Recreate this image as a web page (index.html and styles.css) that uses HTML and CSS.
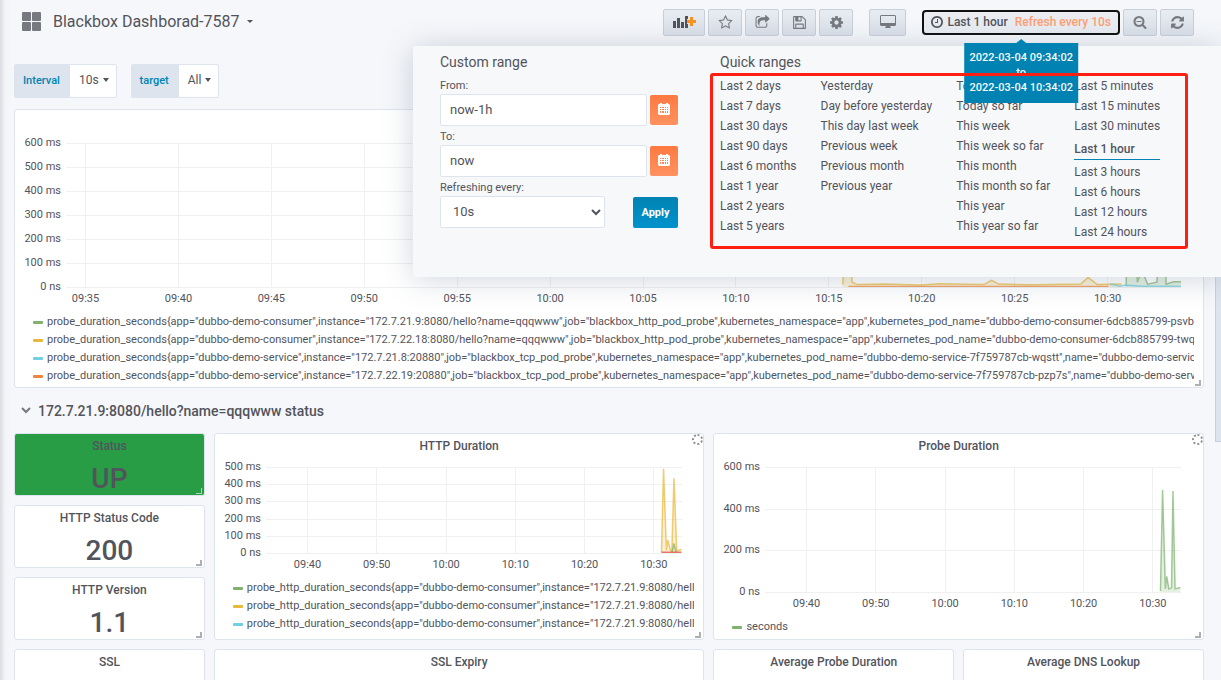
FILE: index.html
```html
<!DOCTYPE html>
<html lang="en">
<head>
    <meta charset="UTF-8">
    <meta name="viewport" content="width=device-width, initial-scale=1.0">
    <title>Blackbox Dashborad-7587</title>
    <link rel="stylesheet" href="styles.css">
</head>
<body>
    <!-- Navbar -->
    <header class="navbar">
        <button class="page-title">
            <svg class="grid-icon" viewBox="0 0 19 19"><rect width="9" height="9" rx="1"/><rect x="10" width="9" height="9" rx="1"/><rect y="10" width="9" height="9" rx="1"/><rect x="10" y="10" width="9" height="9" rx="1"/></svg>
            <span>Blackbox Dashborad-7587</span>
            <i class="caret"></i>
        </button>
        <div class="nav-group">
            <button class="nav-button wide" aria-label="Add panel">
                <svg width="23" height="14" viewBox="0 0 23 14"><path fill="#52545c" d="M0 6h3v7H0zM4 3h3v10H4zM8 7h3v6H8zM12 1h3v3h-1v5h1v4h-3z"/><path fill="#f79420" d="M17 2h3v3h3v3h-3v3h-3V8h-3V5h3z"/></svg>
            </button>
            <button class="nav-button" aria-label="Star">
                <svg width="15" height="15" viewBox="0 0 1792 1792"><path d="M1201 1004l306-297-422-62-189-382-189 382-422 62 306 297-73 421 378-199 377 199zm527-357q0 22-26 48l-363 354 86 500q1 7 1 20 0 50-41 50-19 0-40-12l-449-236-449 236q-22 12-40 12-21 0-31.500-14.500t-10.500-35.500q0-6 2-20l86-500-364-354q-25-27-25-48 0-37 56-46l502-73 225-455q19-41 49-41t49 41l225 455 502 73q56 9 56 46z"/></svg>
            </button>
            <button class="nav-button" aria-label="Share">
                <svg width="15" height="15" viewBox="0 0 1792 1792"><path d="M1472 989v259q0 119-84.500 203.500t-203.500 84.500h-832q-119 0-203.500-84.500t-84.500-203.500v-832q0-119 84.500-203.500t203.500-84.500h255q13 0 22.500 9.500t9.500 22.500q0 27-26 32-77 26-133 60-10 4-16 4h-112q-66 0-113 47t-47 113v832q0 66 47 113t113 47h832q66 0 113-47t47-113v-214q0-19 18-29 28-13 54-37 16-16 35-8 21 9 21 29zm237-496l-384 384q-18 19-45 19-12 0-25-5-39-17-39-59v-192h-160q-323 0-438 131-119 137-74 473 3 23-20 34-8 2-12 2-16 0-26-13-10-14-21-31t-39.500-68.500-49.500-99.500-38.500-114-17.500-122q0-49 3.500-91t14-90 28-88 47-81.500 68.500-74 94.500-61.500 124.500-48.500 159.500-30.500 196.500-11h160v-192q0-42 39-59 13-5 25-5 26 0 45 19l384 384q19 19 19 45t-19 45z"/></svg>
            </button>
            <button class="nav-button" aria-label="Save">
                <svg width="15" height="15" viewBox="0 0 1792 1792"><path d="M512 1536h768v-384h-768v384zm896 0h128v-896q0-14-10-38.500t-20-34.500l-281-281q-10-10-34-20t-39-10v416q0 40-28 68t-68 28h-576q-40 0-68-28t-28-68v-416h-128v1280h128v-416q0-40 28-68t68-28h832q40 0 68 28t28 68v416zm-384-928v-320q0-13-9.500-22.500t-22.500-9.500h-192q-13 0-22.500 9.500t-9.500 22.500v320q0 13 9.500 22.500t22.500 9.500h192q13 0 22.500-9.500t9.500-22.500zm640 32v928q0 40-28 68t-68 28h-1344q-40 0-68-28t-28-68v-1344q0-40 28-68t68-28h928q40 0 88 20t76 48l280 280q28 28 48 76t20 88z"/></svg>
            </button>
            <button class="nav-button" aria-label="Settings">
                <svg width="15" height="15" viewBox="0 0 1792 1792"><path d="M1152 896q0-106-75-181t-181-75-181 75-75 181 75 181 181 75 181-75 75-181zm512-109v222q0 12-8 23t-20 13l-185 28q-19 54-39 91 35 50 107 138 10 12 10 25t-9 23q-27 37-99 108t-94 71q-12 0-26-9l-138-108q-44 23-91 38-16 136-29 186-7 28-36 28h-222q-14 0-24.500-8.500t-11.500-21.500l-28-184q-49-16-90-37l-141 107q-10 9-25 9-14 0-25-11-126-114-165-168-7-10-7-23 0-12 8-23 15-21 51-66.500t54-70.500q-27-50-41-99l-183-27q-13-2-21-12.500t-8-23.500v-222q0-12 8-23t19-13l186-28q14-46 39-92-40-57-107-138-10-12-10-24 0-10 9-23 26-36 98.500-107.500t94.500-71.500q13 0 26 10l138 107q44-23 91-38 16-136 29-186 7-28 36-28h222q14 0 24.500 8.500t11.500 21.500l28 184q49 16 90 37l142-107q9-9 24-9 13 0 25 10 129 119 165 170 7 8 7 22 0 12-8 23-15 21-51 66.500t-54 70.500q26 50 41 98l183 28q13 2 21 12.500t8 23.500z"/></svg>
            </button>
        </div>
        <div class="nav-group">
            <button class="nav-button tv" aria-label="Cycle view mode">
                <svg width="16" height="14" viewBox="0 0 16 14"><path fill-rule="evenodd" d="M1 0h14l1 1v9l-1 1H1l-1-1V1zM1 1v7h14V1zM6 11h4l1 2H5z"/></svg>
            </button>
        </div>
        <div class="nav-group">
            <div class="picker">
                <button class="picker-button">
                    <svg width="12" height="12" viewBox="0 128 1536 1536"><path d="M896 544v448q0 14-9 23t-23 9h-320q-14 0-23-9t-9-23v-64q0-14 9-23t23-9h224v-352q0-14 9-23t23-9h64q14 0 23 9t9 23zm416 352q0-148-73-273t-198-198-273-73-273 73-198 198-73 273 73 273 198 198 273 73 273-73 198-198 73-273zm224 0q0 209-103 385.500t-279.500 279.500-385.500 103-385.500-103-279.500-279.500-103-385.500 103-385.500 279.500-279.500 385.500-103 385.500 103 279.500 279.500 103 385.500z"/></svg>
                    <span>Last 1 hour</span>
                    <span class="refresh-text">Refresh every 10s</span>
                </button>
                <div class="tooltip">2022-03-04 09:34:02<br>to<br>2022-03-04 10:34:02</div>
            </div>
            <button class="nav-button" aria-label="Zoom out">
                <svg width="14" height="14" viewBox="0 0 1792 1792"><path d="M1088 800v64q0 13-9.500 22.500t-22.500 9.500h-576q-13 0-22.500-9.500t-9.500-22.500v-64q0-13 9.500-22.500t22.500-9.500h576q13 0 22.500 9.500t9.500 22.500zm128 32q0-185-131.500-316.500t-316.500-131.500-316.500 131.500-131.500 316.500 131.500 316.500 316.500 131.500 316.500-131.500 131.500-316.500zm512 832q0 53-37.500 90.500t-90.500 37.500q-54 0-90-38l-343-342q-179 124-399 124-143 0-273.500-55.500t-225-150-150-225-55.500-273.500 55.500-273.500 150-225 225-150 273.500-55.500 273.500 55.500 225 150 150 225 55.500 273.500q0 220-124 399l343 343q37 37 37 90z"/></svg>
            </button>
            <button class="nav-button" aria-label="Refresh">
                <svg width="15" height="15" viewBox="0 0 1792 1792"><path d="M1639 1056q0 5-1 7-64 268-268 434.500t-478 166.500q-146 0-282.500-55t-243.500-157l-129 129q-19 19-45 19t-45-19-19-45v-448q0-26 19-45t45-19h448q26 0 45 19t19 45-19 45l-137 137q71 66 161 102t187 36q134 0 250-65t186-179q11-17 53-117 8-23 30-23h192q13 0 22.500 9.500t9.500 22.500zm25-800v448q0 26-19 45t-45 19h-448q-26 0-45-19t-19-45 19-45l138-138q-148-137-349-137-134 0-250 65t-186 179q-11 17-53 117-8 23-30 23h-199q-13 0-22.500-9.500t-9.500-22.500v-7q65-268 270-434.500t480-166.500q146 0 284 55.500t245 156.500l130-129q19-19 45-19t45 19 19 45z"/></svg>
            </button>
        </div>
    </header>

    <!-- Time picker dropdown -->
    <section class="time-dropdown">
        <form class="custom-range">
            <h3 class="range-heading">Custom range</h3>
            <label class="range-label" for="from">From:</label>
            <div class="range-row">
                <input class="range-input" id="from" type="text" value="now-1h">
                <button class="calendar-button" type="button" aria-label="Pick from date">
                    <svg width="12" height="12" viewBox="0 0 12 12"><path fill-rule="evenodd" d="M2 1V0h2v1h4V0h2v1h1l1 1v9l-1 1H1l-1-1V2l1-1zM2 4v1h1V4zm2 0v1h2V4zm3 0v1h1V4zm2 0v1h1V4zM2 6v1h1V6zm2 0v1h2V6zm3 0v1h1V6zm2 0v1h1V6zM2 8v2h1V8zm2 0v2h2V8zm3 0v2h1V8zm2 0v2h1V8z"/></svg>
                </button>
            </div>
            <label class="range-label" for="to">To:</label>
            <div class="range-row">
                <input class="range-input" id="to" type="text" value="now">
                <button class="calendar-button" type="button" aria-label="Pick to date">
                    <svg width="12" height="12" viewBox="0 0 12 12"><path fill-rule="evenodd" d="M2 1V0h2v1h4V0h2v1h1l1 1v9l-1 1H1l-1-1V2l1-1zM2 4v1h1V4zm2 0v1h2V4zm3 0v1h1V4zm2 0v1h1V4zM2 6v1h1V6zm2 0v1h2V6zm3 0v1h1V6zm2 0v1h1V6zM2 8v2h1V8zm2 0v2h2V8zm3 0v2h1V8zm2 0v2h1V8z"/></svg>
                </button>
            </div>
            <label class="range-label" for="refresh">Refreshing every:</label>
            <div class="range-row">
                <select class="range-select" id="refresh">
                    <option>10s</option>
                </select>
                <button class="apply-button" type="button">Apply</button>
            </div>
        </form>
        <div class="quick-ranges">
            <h3 class="range-heading">Quick ranges</h3>
            <div class="quick-lists">
                <ul>
                    <li><a href="#">Last 2 days</a></li>
                    <li><a href="#">Last 7 days</a></li>
                    <li><a href="#">Last 30 days</a></li>
                    <li><a href="#">Last 90 days</a></li>
                    <li><a href="#">Last 6 months</a></li>
                    <li><a href="#">Last 1 year</a></li>
                    <li><a href="#">Last 2 years</a></li>
                    <li><a href="#">Last 5 years</a></li>
                </ul>
                <ul>
                    <li><a href="#">Yesterday</a></li>
                    <li><a href="#">Day before yesterday</a></li>
                    <li><a href="#">This day last week</a></li>
                    <li><a href="#">Previous week</a></li>
                    <li><a href="#">Previous month</a></li>
                    <li><a href="#">Previous year</a></li>
                </ul>
                <ul>
                    <li><a href="#">Today</a></li>
                    <li><a href="#">Today so far</a></li>
                    <li><a href="#">This week</a></li>
                    <li><a href="#">This week so far</a></li>
                    <li><a href="#">This month</a></li>
                    <li><a href="#">This month so far</a></li>
                    <li><a href="#">This year</a></li>
                    <li><a href="#">This year so far</a></li>
                </ul>
                <ul>
                    <li><a href="#">Last 5 minutes</a></li>
                    <li><a href="#">Last 15 minutes</a></li>
                    <li><a href="#">Last 30 minutes</a></li>
                    <li class="active"><a href="#">Last 1 hour</a></li>
                    <li><a href="#">Last 3 hours</a></li>
                    <li><a href="#">Last 6 hours</a></li>
                    <li><a href="#">Last 12 hours</a></li>
                    <li><a href="#">Last 24 hours</a></li>
                </ul>
            </div>
        </div>
    </section>
    <div class="highlight"></div>

    <main class="dashboard">
        <!-- Variables -->
        <div class="submenu">
            <div class="variable">
                <label class="variable-label" for="interval">Interval</label>
                <button class="variable-value" id="interval">10s <i class="caret"></i></button>
            </div>
            <div class="variable">
                <label class="variable-label" for="target">target</label>
                <button class="variable-value" id="target">All <i class="caret"></i></button>
            </div>
        </div>

        <section class="panel">
            <h2 class="panel-title"></h2>
            <svg class="chart chart-main" id="mainChart"></svg>
            <ul class="legend">
                <li><i class="green"></i>probe_duration_seconds{app="dubbo-demo-consumer",instance="172.7.21.9:8080/hello?name=qqqwww",job="blackbox_http_pod_probe",kubernetes_namespace="app",kubernetes_pod_name="dubbo-demo-consumer-6dcb885799-psvbp",name="dubbo-demo-consumer"}</li>
                <li><i class="yellow"></i>probe_duration_seconds{app="dubbo-demo-consumer",instance="172.7.22.18:8080/hello?name=qqqwww",job="blackbox_http_pod_probe",kubernetes_namespace="app",kubernetes_pod_name="dubbo-demo-consumer-6dcb885799-twqnt",name="dubbo-demo-consumer"}</li>
                <li><i class="cyan"></i>probe_duration_seconds{app="dubbo-demo-service",instance="172.7.21.8:20880",job="blackbox_tcp_pod_probe",kubernetes_namespace="app",kubernetes_pod_name="dubbo-demo-service-7f759787cb-wqstt",name="dubbo-demo-service",pod_template_hash="7f759787cb"}</li>
                <li><i class="orange"></i>probe_duration_seconds{app="dubbo-demo-service",instance="172.7.22.19:20880",job="blackbox_tcp_pod_probe",kubernetes_namespace="app",kubernetes_pod_name="dubbo-demo-service-7f759787cb-pzp7s",name="dubbo-demo-service",pod_template_hash="7f759787cb"}</li>
            </ul>
            <i class="resize"></i>
        </section>

        <h2 class="row-title">
            <svg width="10" height="7" viewBox="0 0 10 7"><path d="M1 1l4 4 4-4" fill="none" stroke="#767980" stroke-width="2"/></svg>
            172.7.21.9:8080/hello?name=qqqwww status
        </h2>

        <div class="panel-grid">
            <section class="panel stat up">
                <h2 class="panel-title">Status</h2>
                <div class="stat-value">UP</div>
                <i class="resize"></i>
            </section>
            <section class="panel graph">
                <h2 class="panel-title">HTTP Duration</h2>
                <svg class="chart chart-http" id="httpChart"></svg>
                <ul class="legend">
                    <li><i class="green"></i>probe_http_duration_seconds{app="dubbo-demo-consumer",instance="172.7.21.9:8080/hello?name=qqqwww"}</li>
                    <li><i class="yellow"></i>probe_http_duration_seconds{app="dubbo-demo-consumer",instance="172.7.21.9:8080/hello?name=qqqwww"}</li>
                    <li><i class="cyan"></i>probe_http_duration_seconds{app="dubbo-demo-consumer",instance="172.7.21.9:8080/hello?name=qqqwww"}</li>
                </ul>
                <i class="spinner"></i>
                <i class="resize"></i>
            </section>
            <section class="panel graph">
                <h2 class="panel-title">Probe Duration</h2>
                <svg class="chart chart-probe" id="probeChart"></svg>
                <ul class="legend">
                    <li><i class="green"></i>seconds</li>
                </ul>
                <i class="spinner"></i>
                <i class="resize"></i>
            </section>
            <section class="panel stat">
                <h2 class="panel-title">HTTP Status Code</h2>
                <div class="stat-value">200</div>
                <i class="resize"></i>
            </section>
            <section class="panel stat">
                <h2 class="panel-title">HTTP Version</h2>
                <div class="stat-value">1.1</div>
                <i class="resize"></i>
            </section>
            <section class="panel stat">
                <h2 class="panel-title">SSL</h2>
            </section>
            <section class="panel expiry">
                <h2 class="panel-title">SSL Expiry</h2>
            </section>
            <section class="panel average">
                <h2 class="panel-title">Average Probe Duration</h2>
            </section>
            <section class="panel average">
                <h2 class="panel-title">Average DNS Lookup</h2>
            </section>
        </div>
    </main>
    <div class="scroll-thumb"></div>

    <script>
        // first/step are minutes from the left edge, points are [minute, ms]
        const range = 60;

        function drawChart(id, height, max, yLabels, first, xLabels, step, series) {
            let out = '';
            yLabels.forEach((label, i) => {
                const y = Math.round(height * i / (yLabels.length - 1));
                out += `<line class="grid-line" x1="0" x2="100%" y1="${y}" y2="${y}"/>`;
                out += `<text class="y-label" x="-5" y="${y + 3}">${label}</text>`;
            });
            xLabels.forEach((label, i) => {
                const x = (first + step * i) / range * 100;
                out += `<line class="grid-line" x1="${x}%" x2="${x}%" y1="0" y2="${height}"/>`;
                out += `<text class="x-label" x="${x}%" y="${height + 15}">${label}</text>`;
            });
            out += `<svg width="100%" height="${height}" viewBox="0 0 ${range} ${max}" preserveAspectRatio="none">`;
            series.forEach(s => {
                const points = s.points.map(p => `${p[0]},${max - p[1]}`).join(' ');
                const start = s.points[0][0];
                const end = s.points[s.points.length - 1][0];
                out += `<polygon fill="${s.color}" fill-opacity="0.2" points="${start},${max} ${points} ${end},${max}"/>`;
                out += `<polyline class="series" stroke="${s.color}" points="${points}"/>`;
            });
            document.getElementById(id).innerHTML = out + '</svg>';
        }

        drawChart('mainChart', 144, 600,
            ['600 ms', '500 ms', '400 ms', '300 ms', '200 ms', '100 ms', '0 ns'], 1.05,
            ['09:35', '09:40', '09:45', '09:50', '09:55', '10:00', '10:05', '10:10', '10:15', '10:20', '10:25', '10:30'], 5, [
            { color: '#7eb26d', points: [[57.05, 4], [57.1, 300], [57.5, 300], [57.65, 20], [57.9, 70], [58.2, 12], [58.7, 20], [58.9, 300], [59.1, 300], [59.2, 12], [59.6, 22], [60, 22]] },
            { color: '#eab839', points: [[41.8, 10], [41.9, 200], [42.2, 200], [42.3, 20], [42.6, 10], [44, 12], [46, 8], [47, 14], [49.4, 10], [49.8, 28], [50.2, 12], [52, 9], [54.6, 12], [55, 40], [55.5, 10], [56.8, 12]] },
            { color: '#6ed0e0', points: [[56.2, 14], [56.7, 3], [57, 8], [58, 3], [60, 3]] },
            { color: '#ef843c', points: [[42.1, 2], [56.1, 2]] }
        ]);

        drawChart('httpChart', 86, 500,
            ['500 ms', '400 ms', '300 ms', '200 ms', '100 ms', '0 ns'], 6,
            ['09:40', '09:50', '10:00', '10:10', '10:20', '10:30'], 10, [
            { color: '#eab839', points: [[57.1, 5], [57.4, 490], [57.8, 15], [58, 75], [58.4, 15], [58.6, 10], [58.9, 435], [59.3, 12], [60, 22]] },
            { color: '#7eb26d', points: [[58.6, 5], [58.9, 55], [59.2, 5]] },
            { color: '#e24d42', points: [[57.1, 4], [60, 4]] }
        ]);

        drawChart('probeChart', 125, 600,
            ['600 ms', '400 ms', '200 ms', '0 ns'], 6,
            ['09:40', '09:50', '10:00', '10:10', '10:20', '10:30'], 10, [
            { color: '#7eb26d', points: [[57.1, 5], [57.4, 490], [57.8, 15], [58, 75], [58.3, 15], [58.7, 20], [58.9, 485], [59.2, 15], [60, 22]] }
        ]);
    </script>
</body>
</html>
```
FILE: styles.css
```css
* {
    box-sizing: border-box;
}

body {
    position: relative;
    margin: 0;
    height: 100vh;
    overflow: hidden;
    background: linear-gradient(90deg, #d9dbe0 0, #f2f4f7 5px, #f6f7fa 12px, #f5f7fa 100%);
    color: #52545c;
    font-family: Roboto, "Liberation Sans", sans-serif;
    font-size: 12px;
}

button,
input,
select {
    font-family: inherit;
    color: inherit;
}

ul {
    list-style: none;
    margin: 0;
    padding: 0;
}

.caret {
    display: inline-block;
    border: 4px solid transparent;
    border-top-color: currentColor;
    border-bottom: 0;
}

/* Navbar */
.navbar {
    display: flex;
    align-items: center;
    gap: 16px;
    height: 46px;
    padding: 0 27px 2px 22px;
}

.page-title {
    display: flex;
    align-items: center;
    gap: 12px;
    margin-right: auto;
    padding: 0 0 2px;
    border: 0;
    background: none;
    font-size: 16px;
}

.page-title .caret {
    margin-left: -5px;
    border-width: 3px 3px 0;
}

.grid-icon {
    width: 19px;
    height: 19px;
    fill: #767980;
}

.nav-group {
    display: flex;
    align-items: center;
    gap: 3px;
}

.nav-button {
    display: flex;
    align-items: center;
    justify-content: center;
    width: 34px;
    height: 27px;
    padding: 0;
    border: 1px solid #c7d0d9;
    border-radius: 2px;
    background: linear-gradient(#e8ecf2, #dae0e9);
    fill: #767980;
}

.nav-button.wide {
    width: 42px;
}

.nav-button.tv {
    width: 37px;
}

.picker {
    position: relative;
}

.picker-button {
    display: flex;
    align-items: center;
    gap: 4px;
    height: 25px;
    padding: 0 7px;
    border: 2px solid #101010;
    border-radius: 4px;
    background: #e9edf2;
    fill: #52545c;
    font-size: 12px;
    font-weight: 500;
}

.refresh-text {
    margin-left: 3px;
    color: #ff9e75;
}

.tooltip {
    position: absolute;
    z-index: 3;
    top: 33px;
    left: 50%;
    transform: translateX(-50%);
    padding: 7px 5px 8px;
    background: #0083b3;
    color: #f7f8fa;
    font-size: 11px;
    font-weight: 500;
    line-height: 15px;
    text-align: center;
    white-space: nowrap;
}

.tooltip::before {
    content: "";
    position: absolute;
    top: -4px;
    left: 50%;
    margin-left: -5px;
    border: 5px solid transparent;
    border-top: 0;
    border-bottom: 4px solid #0083b3;
}

/* Time picker dropdown */
.time-dropdown {
    position: absolute;
    z-index: 2;
    top: 46px;
    right: 0;
    display: flex;
    gap: 42px;
    width: 808px;
    height: 231px;
    padding: 7px 27px;
    border-radius: 3px 0 0 3px;
    background: #f7f8fa;
    box-shadow: 0 2px 30px rgba(80, 100, 130, 0.28);
}

.custom-range {
    width: 238px;
}

.range-heading {
    margin: 0;
    font-size: 14px;
    font-weight: 400;
    line-height: 18px;
}

.range-label {
    display: block;
    margin-top: 4px;
    font-size: 11px;
    line-height: 14px;
}

.range-heading + .range-label {
    margin-top: 8px;
}

.range-row {
    display: flex;
    align-items: center;
    justify-content: space-between;
    margin-top: 1px;
}

.range-input,
.range-select {
    height: 32px;
    border: 1px solid #dde4ed;
    border-radius: 2px;
    background: #fff;
    font-size: 13px;
}

.range-input {
    width: 207px;
    padding: 0 9px 2px;
}

.range-select {
    width: 165px;
    padding: 0 0 1px 8px;
}

.calendar-button {
    width: 28px;
    height: 30px;
    padding: 0;
    border: 0;
    border-radius: 2px;
    background: linear-gradient(#ff7941, #ff9260);
    fill: #fff;
}

.apply-button {
    width: 45px;
    height: 31px;
    padding: 0;
    border: 0;
    border-radius: 2px;
    background: linear-gradient(#0083b3, #0092cc);
    color: #fff;
    font-size: 11px;
    font-weight: 700;
}

.quick-lists {
    display: flex;
    gap: 24px;
    margin-top: 5px;
    line-height: 20px;
    white-space: nowrap;
}

.quick-lists a {
    color: #52545c;
    text-decoration: none;
}

.quick-lists .active {
    margin: 3px 0 2px;
    border-bottom: 1px solid #0083b3;
    font-weight: 500;
}

.highlight {
    position: absolute;
    z-index: 4;
    top: 73px;
    right: 33px;
    width: 478px;
    height: 176px;
    border: 3px solid #ff1f12;
    border-radius: 3px;
}

/* Dashboard */
.dashboard {
    padding: 18px 17px 0 14px;
}

.submenu {
    display: flex;
    gap: 14px;
    margin-bottom: 11px;
}

.variable {
    display: flex;
    height: 34px;
}

.variable-label {
    display: flex;
    align-items: center;
    padding: 0 9px 2px;
    border-radius: 2px 0 0 2px;
    background: #dde4ed;
    color: #0083b3;
    font-size: 11px;
    font-weight: 500;
}

.variable-value {
    display: flex;
    align-items: center;
    gap: 4px;
    padding: 0 7px 2px 9px;
    border: 1px solid #dde4ed;
    border-radius: 0 2px 2px 0;
    background: #fff;
    font-size: 12px;
}

.variable-value .caret {
    border-width: 4px 3px 0;
}

.panel {
    position: relative;
    min-width: 0;
    padding: 0 9px 2px;
    border: 1px solid #dde4ed;
    border-radius: 3px;
    background: #fff;
}

.panel-title {
    height: 24px;
    margin: 0;
    font-size: 12px;
    font-weight: 500;
    line-height: 24px;
    text-align: center;
}

.chart {
    display: block;
    width: calc(100% - 55px);
    margin: 9px 13px 25px 42px;
    overflow: visible;
    fill: #52545c;
    font-size: 11px;
}

.chart-main {
    height: 144px;
}

.chart-http {
    height: 86px;
}

.chart-probe {
    height: 125px;
}

.grid-line {
    stroke: #f0f0f1;
    shape-rendering: crispEdges;
}

.y-label {
    text-anchor: end;
}

.x-label {
    text-anchor: middle;
}

.series {
    fill: none;
    stroke-opacity: 0.7;
    stroke-width: 1.5px;
    vector-effect: non-scaling-stroke;
}

.legend {
    padding: 1px 0 0 9px;
    font-size: 11px;
    line-height: 18px;
}

.legend li {
    overflow: hidden;
    white-space: nowrap;
}

.legend i {
    display: inline-block;
    width: 10px;
    height: 3px;
    margin-right: 4px;
    border-radius: 1px;
    vertical-align: middle;
}

.green { background: #7eb26d; }
.yellow { background: #eab839; }
.cyan { background: #6ed0e0; }
.orange { background: #ef843c; }

.resize {
    position: absolute;
    right: 2px;
    bottom: 1px;
    width: 6px;
    height: 6px;
    border: solid #acb0b6;
    border-width: 0 2px 2px 0;
}

.spinner {
    position: absolute;
    top: 0;
    right: 0;
    width: 11px;
    height: 11px;
    border: 2px dotted #8e9198;
    border-radius: 50%;
}

.row-title {
    display: flex;
    align-items: center;
    gap: 7px;
    height: 45px;
    margin: 0;
    padding-left: 7px;
    font-size: 14px;
    font-weight: 500;
}

.panel-grid {
    display: grid;
    grid-template-columns: repeat(24, 1fr);
    grid-auto-rows: 63px;
    gap: 9px;
}

.stat {
    grid-column: 1 / span 4;
}

.graph {
    grid-column: span 10;
    grid-row: span 3;
}

.expiry {
    grid-column: span 10;
}

.average {
    grid-column: span 5;
}

.stat-value {
    font-size: 28px;
    font-weight: 500;
    line-height: 42px;
    text-align: center;
}

.up {
    background: #299c46;
}

.up .resize {
    border-color: #a9d7b5;
    border-width: 0 1px 1px 0;
}

.scroll-thumb {
    position: absolute;
    top: 46px;
    right: 0;
    width: 6px;
    height: 396px;
    border: 1px solid #c7d0e0;
    border-right: 0;
    background: #dde4ed;
}
```
